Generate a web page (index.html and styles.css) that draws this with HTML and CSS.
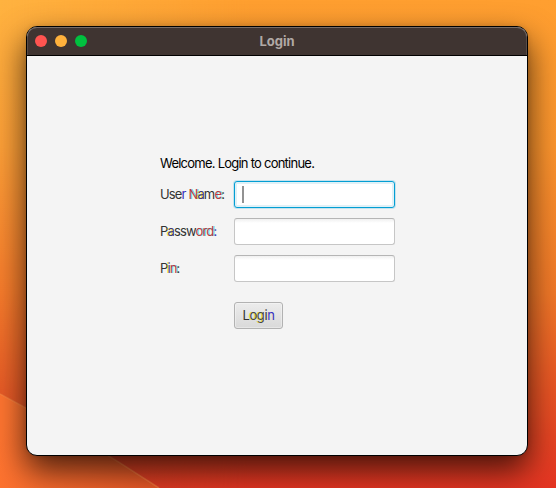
FILE: index.html
```html
<!DOCTYPE html>
<html lang="en">
<head>
<meta charset="utf-8">
<title>Login</title>
<link rel="stylesheet" href="styles.css">
</head>
<body>
<svg class="wallpaper" viewBox="0 0 556 488" aria-hidden="true">
  <defs>
    <linearGradient id="left" x1="0" y1="0" x2="0" y2="1">
      <stop offset="0" stop-color="#ffb340"/>
      <stop offset=".3" stop-color="#fda038"/>
      <stop offset=".6" stop-color="#f77c2c"/>
      <stop offset=".8" stop-color="#e85c27"/>
      <stop offset="1" stop-color="#d84524"/>
    </linearGradient>
    <linearGradient id="right" x1="0" y1="0" x2="0" y2="1">
      <stop offset="0" stop-color="#ff9f30"/>
      <stop offset=".3" stop-color="#fb942d"/>
      <stop offset=".6" stop-color="#f17828"/>
      <stop offset=".8" stop-color="#e85424"/>
      <stop offset="1" stop-color="#e43422"/>
    </linearGradient>
    <linearGradient id="blend"><stop offset="0" stop-color="#000"/><stop offset=".45" stop-color="#fff"/></linearGradient>
    <mask id="fade"><rect width="556" height="488" fill="url(#blend)"/></mask>
    <linearGradient id="ridge" gradientUnits="userSpaceOnUse" x1="0" y1="440" x2="150" y2="488">
      <stop offset="0" stop-color="#ff7530"/><stop offset="1" stop-color="#e85827"/>
    </linearGradient>
  </defs>
  <rect width="556" height="488" fill="url(#left)"/>
  <rect width="556" height="488" fill="url(#right)" mask="url(#fade)"/>
  <path d="M0 394 Q80 436 159 488 H0Z" fill="url(#ridge)"/>
  <path d="M0 394 Q80 436 159 488" fill="none" stroke="#ff9a50" stroke-opacity=".4" stroke-width="1.5"/>
</svg>
<main class="window">
  <header class="titlebar">
    <div class="controls">
      <span class="dot close"></span><span class="dot minimize"></span><span class="dot zoom"></span>
    </div>
    <h1 class="title">Login</h1>
  </header>
  <form class="form">
    <p class="welcome">Welcome. Login to continue.</p>
    <label class="label" for="user">Use<span class="blue">r</span> <span class="red">N</span><span class="yellow">a</span>m<span class="red">e</span>:</label>
    <div class="field focused" id="user"><span class="caret"></span></div>
    <label class="label" for="password">P<span class="yellow">a</span>ssw<span class="red">ord</span><span class="blue">:</span></label>
    <div class="field" id="password"></div>
    <label class="label" for="pin">P<span class="yellow">i</span><span class="red">n</span>:</label>
    <div class="field" id="pin"></div>
    <button class="button" type="button">L<span class="yellow-dark">og</span>i<span class="blue">n</span></button>
  </form>
</main>
</body>
</html>
```
FILE: styles.css
```css
* { box-sizing: border-box; }
body {
  margin: 0;
  height: 488px;
  padding: 26px;
  overflow: hidden;
  background: #f58a2c;
  font-family: Inter, "Liberation Sans", sans-serif;
}
.wallpaper { position: absolute; inset: 0; width: 556px; height: 488px; }
.window {
  position: relative;
  width: 502px;
  height: 430px;
  border: 1px solid #000;
  border-radius: 11px;
  background: #f4f4f4;
  overflow: hidden;
  box-shadow: 0 14px 32px rgba(0, 0, 0, .7), 0 0 5px rgba(0, 0, 0, .12);
}
.titlebar {
  display: grid;
  grid-template-columns: 1fr auto 1fr;
  align-items: center;
  height: 29px;
  padding: 0 8px;
  background: #3f3431;
  border-bottom: 1px solid #000;
  border-radius: 10px 10px 0 0;
  box-shadow: inset 0 1px #756c69, inset 1px 0 #574d4a, inset -1px 0 #574d4a;
}
.controls { display: flex; gap: 8px; }
.dot { width: 12px; height: 12px; border-radius: 50%; }
.close { background: #ff5450; }
.minimize { background: #ffb13c; }
.zoom { background: #00c03f; }
.title {
  margin: 0;
  color: #b1a9a5;
  font-size: 13px;
  line-height: 16px;
  font-weight: 700;
}
.form {
  display: grid;
  grid-template-columns: 64px 161px;
  grid-template-rows: 15px 27px 27px 27px 27px;
  gap: 10px;
  align-items: center;
  padding: 100px 0 0 133px;
}
.welcome {
  grid-column: 1 / 3;
  margin: 0;
  color: #000;
  font-size: 13px;
  line-height: 15px;
  letter-spacing: -.76px;
  white-space: nowrap;
}
.label {
  color: #333;
  font-size: 13px;
  line-height: 15px;
  letter-spacing: -.85px;
  white-space: nowrap;
}
.blue { color: #3530c8; text-shadow: -.5px 0 rgba(235, 225, 40, .4); }
.red { color: #b83a44; text-shadow: 1px 0 rgba(40, 220, 220, .8); }
.yellow { color: #3c3878; text-shadow: -1px 0 rgba(245, 235, 20, .9); }
.yellow-dark { color: #45454c; text-shadow: -1px 0 rgba(230, 225, 20, .9); }
.field {
  width: 161px;
  height: 27px;
  border: 1px solid #c6c6c6;
  border-top-color: #b5b5b5;
  border-radius: 3px;
  background: linear-gradient(#f0f0f0, #fff 4px);
}
.focused {
  display: flex;
  align-items: center;
  padding-left: 7px;
  border-color: #039ed3;
  background: #fff;
  box-shadow: 0 0 0 1px #c5e3ee, inset 0 0 0 2px #e0f1f7;
}
.caret { width: 2px; height: 17px; background: #929292; }
.button {
  grid-column: 2;
  width: 49px;
  height: 27px;
  margin-top: 20px;
  padding: 0;
  border: 1px solid #b2b2b2;
  border-radius: 3px;
  background: linear-gradient(#ececec, #d9d9d9);
  box-shadow: inset 0 0 0 1px rgba(255, 255, 255, .35);
  color: #333;
  font: 13px/15px Inter, "Liberation Sans", sans-serif;
  letter-spacing: -.4px;
}
```
